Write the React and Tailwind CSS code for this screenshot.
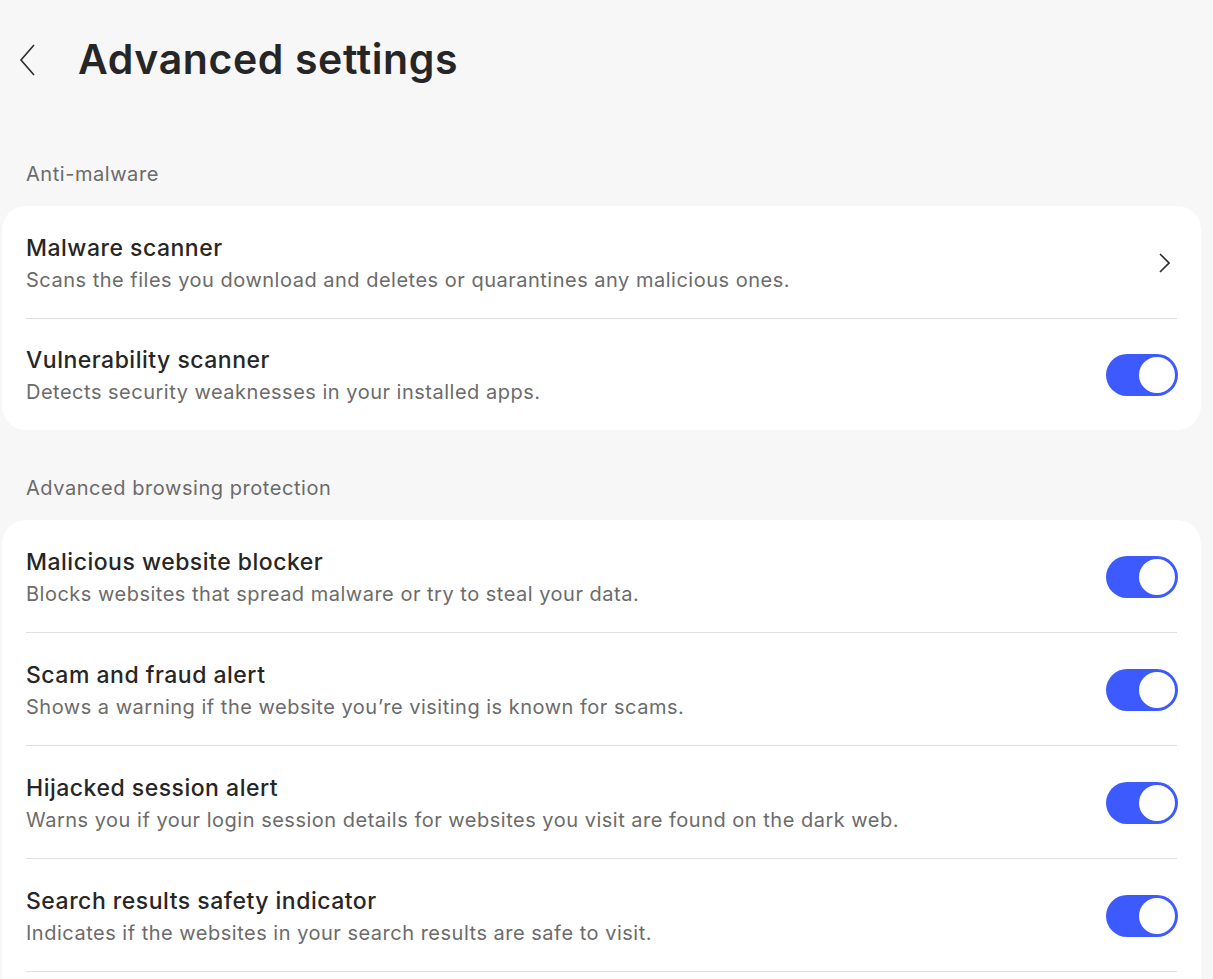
import React from "react";

const Toggle = () => (
  <div className="w-[72px] h-[42px] rounded-full bg-[#3d5afe] flex items-center justify-end pr-[3px] shrink-0 mr-[-1px] mt-[1px]">
    <div className="w-[36px] h-[36px] rounded-full bg-white" />
  </div>
);

const Chevron = () => (
  <svg width="12" height="22" viewBox="0 0 12 22" className="shrink-0 mr-[7px] mt-[1px]">
    <path d="M2 2 L11 11 L2 20" fill="none" stroke="#2b2b2b" strokeWidth="1.6" />
  </svg>
);

const Row = ({ title, desc, action, last }) => (
  <div className={"flex items-center mx-6 " + (last ? "h-[111px]" : "h-[113px] border-b border-[#e0e0e0]")}>
    <div className="flex-1 flex flex-col pt-[3px]">
      <div className="text-[23px] leading-[32px] text-[#262626] font-medium tracking-[0.5px]">{title}</div>
      <div className="text-[20px] leading-[32px] text-[#6b6b6b] tracking-[0.5px]">{desc}</div>
    </div>
    {action === "chevron" ? <Chevron /> : <Toggle />}
  </div>
);

export default function App() {
  return (
    <div
      className="w-[1213px] h-[979px] bg-[#f7f7f7] overflow-hidden"
      style={{ fontFamily: "Inter, 'Noto Sans', sans-serif" }}
    >
      <div className="flex items-center h-[120px] pb-[1px]">
        <svg width="20" height="34" viewBox="0 0 20 34" className="ml-[18px] mr-[40px]">
          <path d="M16 2 L3 17 L16 32" fill="none" stroke="#2b2b2b" strokeWidth="1.6" />
        </svg>
        <h1 className="text-[41px] font-semibold text-[#262626] tracking-[0.6px]">Advanced settings</h1>
      </div>

      <div className="pl-[26px] pt-[40px] h-[86px] text-[20px] leading-[28px] text-[#6b6b6b] tracking-[0.55px]">
        Anti-malware
      </div>

      <div className="ml-[2px] w-[1199px] bg-white rounded-[24px]">
        <Row
          title="Malware scanner"
          desc="Scans the files you download and deletes or quarantines any malicious ones."
          action="chevron"
        />
        <Row
          title="Vulnerability scanner"
          desc="Detects security weaknesses in your installed apps."
          last
        />
      </div>

      <div className="pl-[26px] pt-[44px] h-[90px] text-[20px] leading-[28px] text-[#6b6b6b] tracking-[0.55px]">
        Advanced browsing protection
      </div>

      <div className="ml-[2px] w-[1199px] h-[600px] bg-white rounded-t-[24px]">
        <Row title="Malicious website blocker" desc="Blocks websites that spread malware or try to steal your data." />
        <Row title="Scam and fraud alert" desc="Shows a warning if the website you’re visiting is known for scams." />
        <Row
          title="Hijacked session alert"
          desc="Warns you if your login session details for websites you visit are found on the dark web."
        />
        <Row title="Search results safety indicator" desc="Indicates if the websites in your search results are safe to visit." />
      </div>
    </div>
  );
}
